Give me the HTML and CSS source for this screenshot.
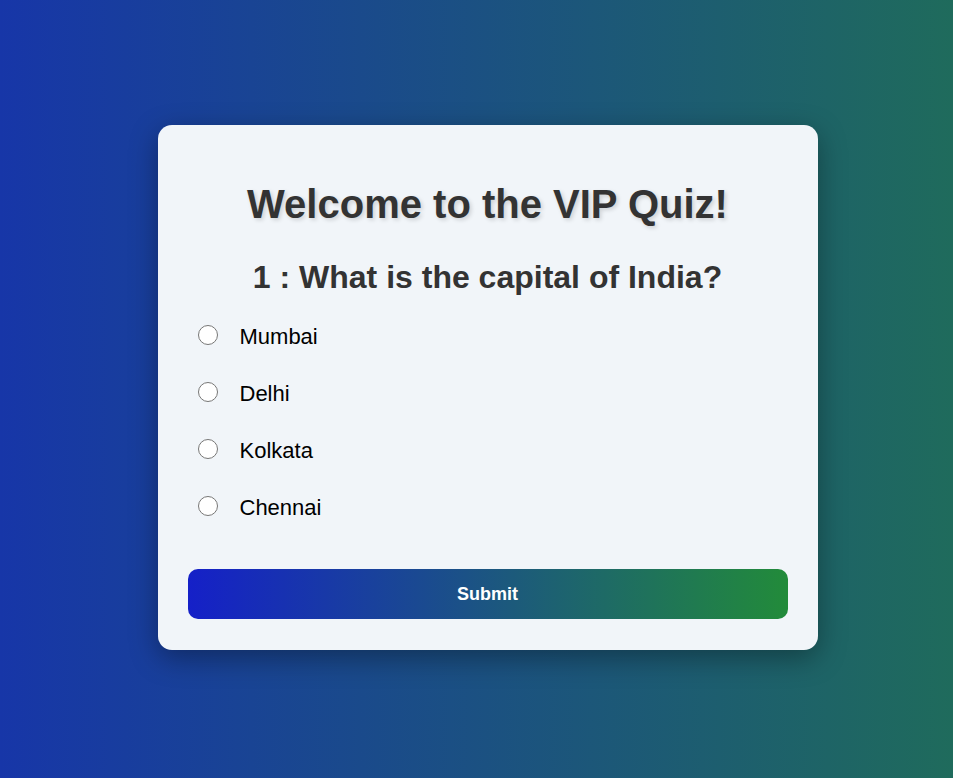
FILE: index.html
```html
<!DOCTYPE html>
<html>
<head>
<meta charset="utf-8">
<link rel="stylesheet" href="styles.css">
</head>
<body>
<div class="card">
  <h1 class="title">Welcome to the VIP Quiz!</h1>
  <h2 class="question">1 : What is the capital of India?</h2>
  <ul class="options">
    <li class="option"><input type="radio" name="q" class="radio"><label>Mumbai</label></li>
    <li class="option"><input type="radio" name="q" class="radio"><label>Delhi</label></li>
    <li class="option"><input type="radio" name="q" class="radio"><label>Kolkata</label></li>
    <li class="option"><input type="radio" name="q" class="radio"><label>Chennai</label></li>
  </ul>
  <button class="submit">Submit</button>
</div>
</body>
</html>
```
FILE: styles.css
```css
html, body { margin: 0; height: 100%; }
body {
  font-family: "Liberation Sans", Arial, sans-serif;
  background: linear-gradient(to right, #1736a8, #1f6b5c);
  display: flex;
  align-items: center;
  justify-content: center;
  padding-left: 22px;
  padding-bottom: 3px;
  box-sizing: border-box;
}
.card {
  width: 600px;
  padding: 30px 30px 31px;
  background: #f1f5f9;
  border-radius: 14px;
  box-shadow: 0 8px 28px rgba(0,0,0,0.35);
}
.title {
  margin: 26px 0 0;
  text-align: center;
  font-size: 40px;
  color: #333;
  text-shadow: 2px 2px 4px rgba(0,0,0,0.15);
  line-height: 46px;
}
.question {
  margin: 32px 0 0;
  text-align: center;
  font-size: 32px;
  color: #333;
  line-height: 37px;
}
.options { list-style: none; margin: 12px 0 0; padding: 0; }
.option {
  display: flex;
  align-items: center;
  height: 57px;
  padding-left: 10px;
  font-size: 22px;
  color: #000;
}
.radio {
  width: 20px; height: 20px; margin: -4px 22px 0 0;
}
.submit {
  display: block;
  margin-top: 33px;
  width: 100%;
  height: 50px;
  border: none;
  border-radius: 10px;
  background: linear-gradient(to right, #1520c8, #228b3a);
  color: #fff;
  font-family: "Liberation Sans", Arial, sans-serif;
  font-size: 18px;
  font-weight: bold;
}
```
